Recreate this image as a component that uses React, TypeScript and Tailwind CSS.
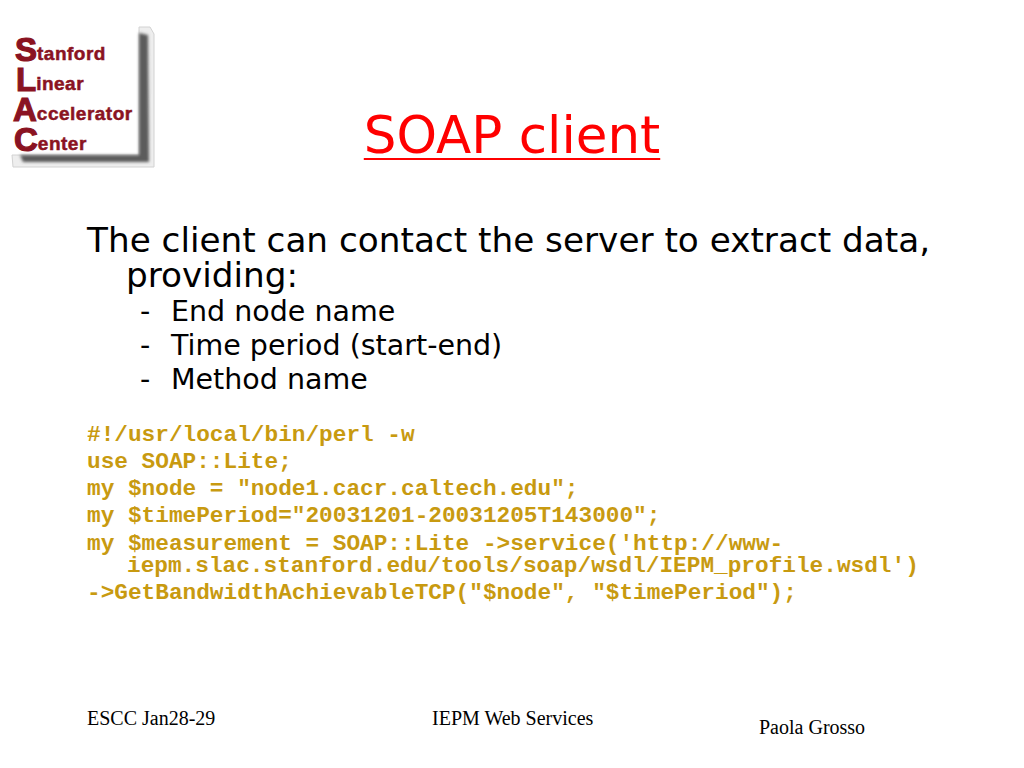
import React from 'react'

const sans = "font-['DejaVu_Sans',sans-serif]"

// logo line: big initial followed by small bold letters
function LogoLine({ first, rest, className }: { first: string; rest: string; className: string }) {
  return (
    <div className={`flex items-end h-[30px] leading-none text-[#8a1322] font-['Liberation_Sans',sans-serif] font-bold [-webkit-text-stroke:0.5px_#8a1322] ${className}`}>
      <span className="text-[33px] leading-[30px] [-webkit-text-stroke:1.2px_#8a1322]">{first}</span>
      <span className="text-[19px] leading-[23px] tracking-[0.5px]">{rest}</span>
    </div>
  )
}

function Logo() {
  return (
    <div className="relative w-[146px] h-[144px]">
      <svg className="absolute inset-0" width="146" height="144" viewBox="0 0 146 144">
        <defs>
          <filter id="soft" x="-10%" y="-10%" width="120%" height="120%">
            <feGaussianBlur stdDeviation="1.6" />
          </filter>
        </defs>
        <path d="M128 1 L139 1 L143 8 L143 141 L2 141 L1 129 L128 129 Z" fill="#eeeeee" stroke="#d2d2d2" strokeWidth="1" />
        <path d="M128 7 L137 9 L138 136 L12 136 L9 129 L128 129 Z" fill="#5c5c5c" filter="url(#soft)" />
      </svg>
      <div className="relative pt-[9px] pl-[2px]">
        <LogoLine first="S" rest="tanford" className="pl-[2px]" />
        <LogoLine first="L" rest="inear" className="pl-[3px]" />
        <LogoLine first="A" rest="ccelerator" />
        <LogoLine first="C" rest="enter" className="pl-[1px]" />
      </div>
    </div>
  )
}

const bullets = ['End node name', 'Time period (start-end)', 'Method name']

const code = [
  '#!/usr/local/bin/perl -w',
  'use SOAP::Lite;',
  'my $node = "node1.cacr.caltech.edu";',
  'my $timePeriod="20031201-20031205T143000";',
]

export default function App() {
  return (
    <div className="w-[1024px] h-[768px] bg-white flex flex-col overflow-hidden">
      {/* Header */}
      <div className="relative h-[185px] shrink-0 pt-[106px] text-center">
        <div className="absolute left-[11px] top-[26px]">
          <Logo />
        </div>
        <h1 className={`${sans} text-[51.5px] leading-[58px] text-[#ff0000] underline decoration-[2px] underline-offset-[5px]`}>
          SOAP client
        </h1>
      </div>

      {/* Body */}
      <div className="flex-1 pl-[87px] pr-[60px] pt-[38px]">
        <p className={`${sans} text-[34.25px] leading-[35px] text-black pl-[39px] -indent-[39px]`}>
          The client can contact the server to extract data, providing:
        </p>
        <ul className={`${sans} text-[28.5px] leading-[34px] text-black ml-[53px] mt-[2px]`}>
          {bullets.map((b) => (
            <li key={b} className="flex">
              <span className="w-[31px]">-</span>
              <span>{b}</span>
            </li>
          ))}
        </ul>
        <div className="mt-[25px] font-['Liberation_Mono',monospace] font-bold text-[22.75px] text-[#c89a10] leading-[27px]">
          {code.map((c) => (
            <div key={c}>{c}</div>
          ))}
          <div className="pl-[40px] -indent-[40px] leading-[22px] pt-[3px]">
            my $measurement = SOAP::Lite -&gt;service('http://www-
            <br />
            iepm.slac.stanford.edu/tools/soap/wsdl/IEPM_profile.wsdl')
          </div>
          <div className="pt-[3px]">-&gt;GetBandwidthAchievableTCP("$node", "$timePeriod");</div>
        </div>
      </div>

      {/* Footer */}
      <div className="h-[68px] shrink-0 font-['Liberation_Serif',serif] text-[20px] leading-[23px] text-black flex pl-[87px]">
        <span className="w-[345px] mt-[7px]">ESCC Jan28-29</span>
        <span className="w-[327px] mt-[7px]">IEPM Web Services</span>
        <span className="mt-[16px]">Paola Grosso</span>
      </div>
    </div>
  )
}
